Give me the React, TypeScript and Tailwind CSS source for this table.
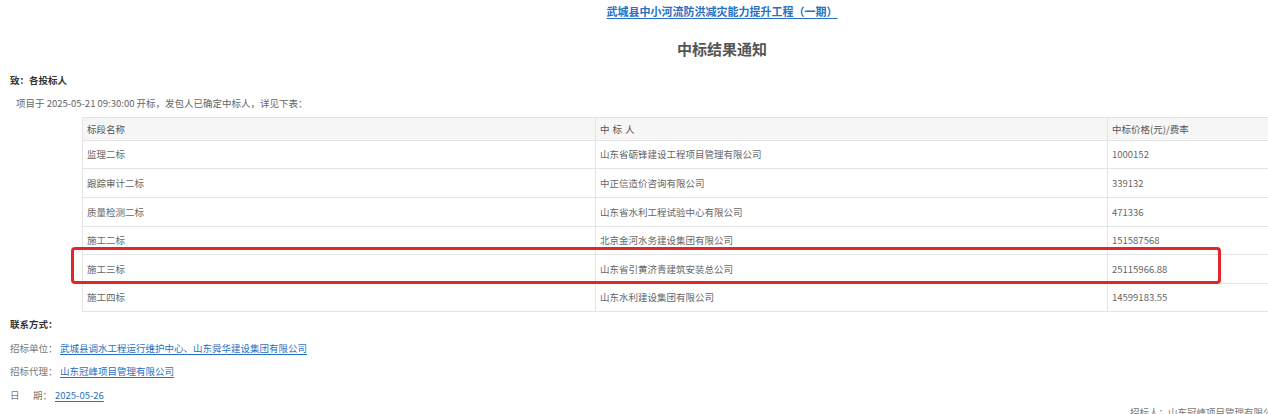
import React from 'react'

// 中标结果通知 — 静态复刻

const ROWS: { section: string; winner: string; price: string; h: string }[] = [
  { section: '监理二标', winner: '山东省砺锋建设工程项目管理有限公司', price: '1000152', h: 'h-[28px]' },
  { section: '跟踪审计二标', winner: '中正信造价咨询有限公司', price: '339132', h: 'h-[29px]' },
  { section: '质量检测二标', winner: '山东省水利工程试验中心有限公司', price: '471336', h: 'h-[29px]' },
  { section: '施工二标', winner: '北京金河水务建设集团有限公司', price: '151587568', h: 'h-[28px]' },
  { section: '施工三标', winner: '山东省引黄济青建筑安装总公司', price: '25115966.88', h: 'h-[29px]' },
  { section: '施工四标', winner: '山东水利建设集团有限公司', price: '14599183.55', h: 'h-[28px]' },
]

const font = 'font-["Microsoft_YaHei","Noto_Sans_CJK_SC","Noto_Sans",sans-serif]'

export default function App() {
  return (
    <div className={`w-[1268px] h-[414px] overflow-hidden bg-white ${font}`}>
      <div className="w-[1444px]">
        <div className="pt-[4px] text-center text-[11px] leading-[14px]">
          <a href="#" className="font-bold text-[#2870c2] underline underline-offset-2">
            武城县中小河流防洪减灾能力提升工程（一期）
          </a>
        </div>

        <h1 className="mt-[21px] text-center text-[15px] leading-[20px] font-bold text-[#555]">
          中标结果通知
        </h1>

        <p className="mt-[14px] pl-[10px] text-[9.5px] leading-[14px] font-bold text-[#333]">
          致：各投标人
        </p>
        <p className="mt-[9px] pl-[16px] text-[9.5px] leading-[14px] text-[#666]">
          项目于 2025-05-21 09:30:00 开标，发包人已确定中标人，详见下表：
        </p>

        <div className="relative mt-[7px] ml-[82px] w-[1539px]">
          <table className="w-full table-fixed border-collapse text-[9.5px] text-[#666]">
            <colgroup>
              <col className="w-[513px]" />
              <col className="w-[512px]" />
              <col className="w-[514px]" />
            </colgroup>
            <thead>
              <tr className="h-[23px] bg-[#f6f6f6] text-[#555]">
                <th className="border border-[#e4e4e4] px-[4px] text-left font-normal">标段名称</th>
                <th className="border border-[#e4e4e4] px-[4px] text-left font-normal tracking-[3px]">中标人</th>
                <th className="border border-[#e4e4e4] px-[4px] text-left font-normal">中标价格(元)/费率</th>
              </tr>
            </thead>
            <tbody>
              {ROWS.map((r) => (
                <tr key={r.section} className={r.h}>
                  <td className="border border-[#e4e4e4] px-[4px]">{r.section}</td>
                  <td className="border border-[#e4e4e4] px-[4px]">{r.winner}</td>
                  <td className="border border-[#e4e4e4] px-[4px]">{r.price}</td>
                </tr>
              ))}
            </tbody>
          </table>
          {/* 红框标注 */}
          <div className="pointer-events-none absolute left-[-11px] top-[130px] h-[37px] w-[1150px] rounded-[4px] border-[3px] border-[#e0272b]" />
        </div>

        <p className="mt-[5px] pl-[10px] text-[9.5px] leading-[14px] font-bold text-[#333]">
          联系方式：
        </p>
        <div className="mt-[10px] flex pl-[10px] text-[9.5px] leading-[14px] text-[#777]">
          <span className="w-[50px]">招标单位：</span>
          <a href="#" className="text-[#2870c2] underline underline-offset-2">
            武城县调水工程运行维护中心、山东舜华建设集团有限公司
          </a>
        </div>
        <div className="mt-[9px] flex pl-[10px] text-[9.5px] leading-[14px] text-[#777]">
          <span className="w-[50px]">招标代理：</span>
          <a href="#" className="text-[#2870c2] underline underline-offset-2">
            山东冠峰项目管理有限公司
          </a>
        </div>
        <div className="mt-[10px] flex pl-[10px] text-[9.5px] leading-[14px] text-[#777]">
          <span className="w-[45px]">
            <span className="inline-block w-[23px]">日</span>期：
          </span>
          <a href="#" className="text-[#2870c2] underline underline-offset-2">
            2025-05-26
          </a>
        </div>
        <p className="mt-[3px] ml-[1130px] whitespace-nowrap text-[9.5px] leading-[14px] text-[#777]">
          招标人：山东冠峰项目管理有限公司
        </p>
      </div>
    </div>
  )
}
